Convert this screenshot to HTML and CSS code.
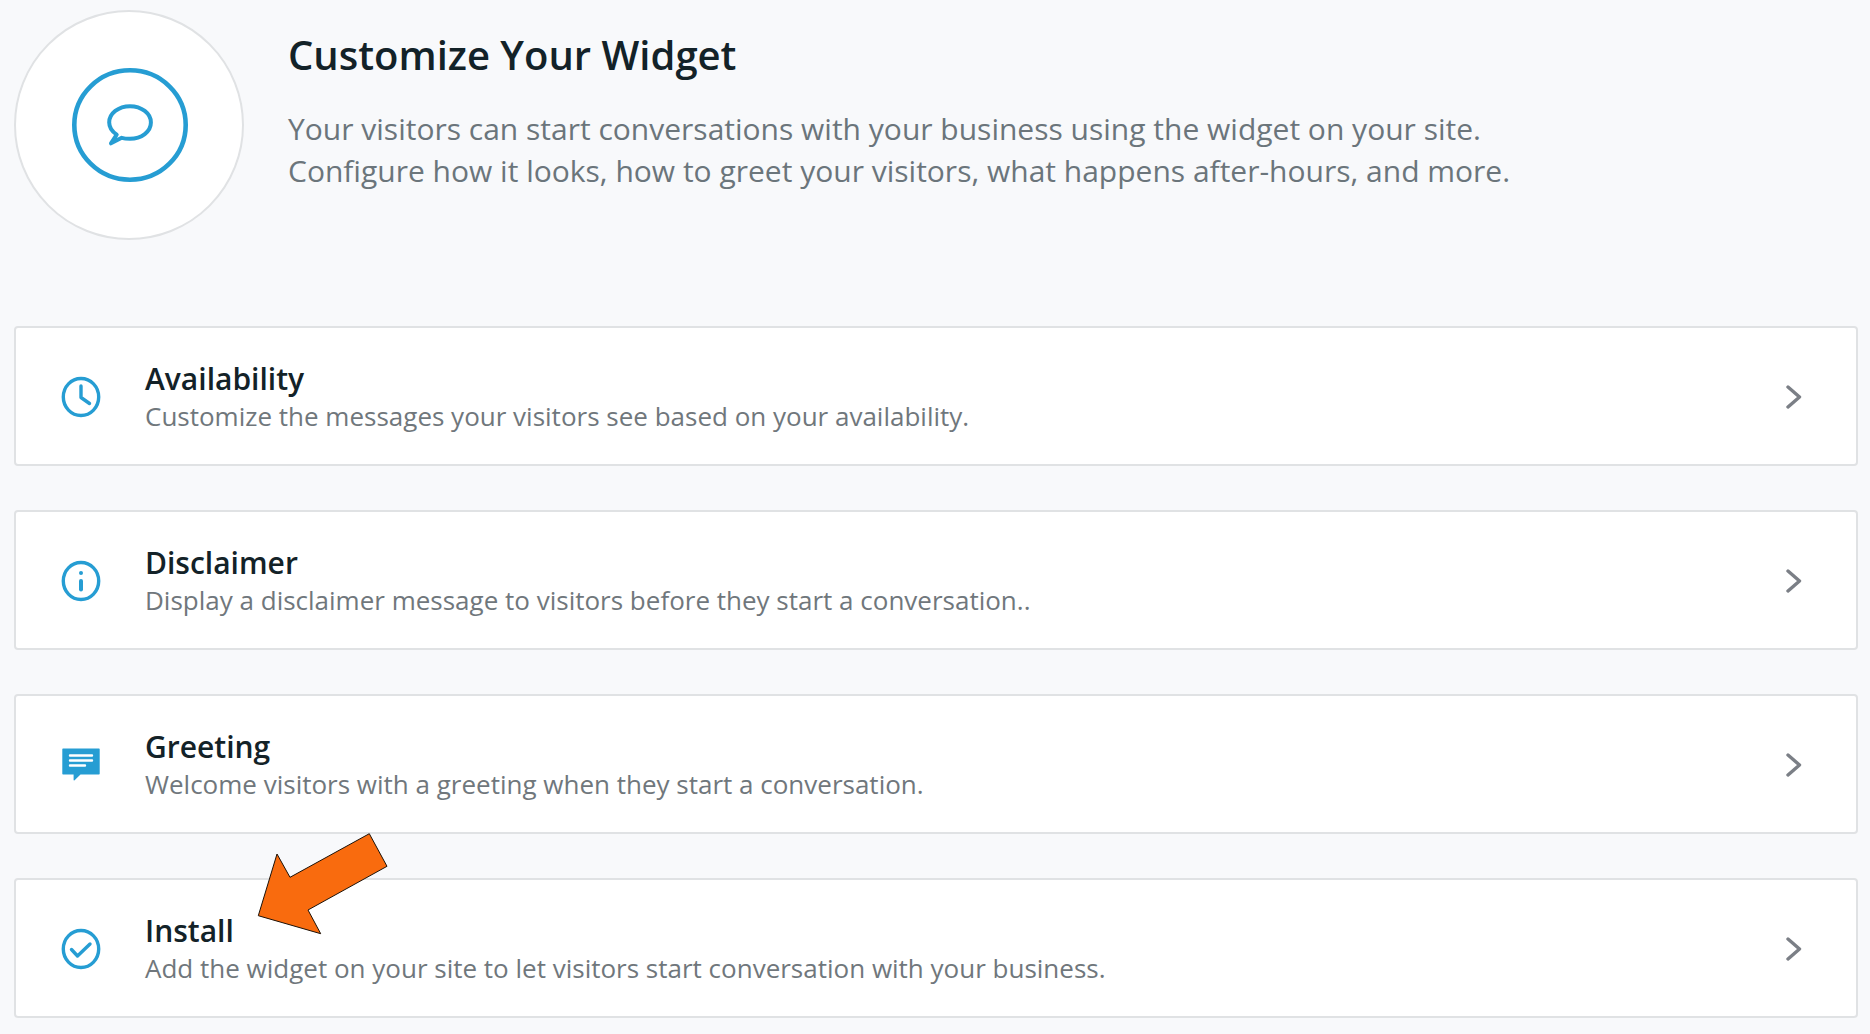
FILE: index.html
```html
<!DOCTYPE html>
<html lang="en">
<head>
    <meta charset="UTF-8">
    <meta name="viewport" content="width=device-width, initial-scale=1.0">
    <title>Customize Your Widget</title>
    <link rel="stylesheet" href="styles.css">
</head>
<body>

<header class="header">
    <div class="header-icon">
        <svg width="116" height="114" viewBox="0 0 116 114" fill="none" stroke="currentColor">
            <ellipse cx="58" cy="57" rx="55.7" ry="54.7" stroke-width="4.6"/>
            <path d="M58 38.2c11.5 0 20.9 7.2 20.9 16.3S69.5 70.8 58 70.8c-2.9 0-5.7-.2-8.3-1L39 75.300l5.700-8.700c-4.600-3-7.500-7.300-7.500-12.100C37.200 45.400 46.500 38.200 58 38.200z" stroke-width="4" stroke-linejoin="round"/>
        </svg>
    </div>
    <div class="header-text">
        <h1>Customize Your Widget</h1>
        <p>Your visitors can start conversations with your business using the widget on your site.<br>
        Configure how it looks, how to greet your visitors, what happens after-hours, and more.</p>
    </div>
</header>

<main class="card-list">
    <a class="card" href="#availability">
        <svg class="card-icon" viewBox="0 0 40 42" fill="none" stroke="currentColor" stroke-linecap="round" stroke-linejoin="round">
            <ellipse cx="20" cy="21" rx="17.7" ry="18.5" stroke-width="3.4"/>
            <path d="M20 10v11.500l8.500 6" stroke-width="3.4"/>
        </svg>
        <div class="card-text">
            <h2>Availability</h2>
            <p>Customize the messages your visitors see based on your availability.</p>
        </div>
        <svg class="chevron" viewBox="0 0 16 24"><path d="M2 2l11.500 10L2 22"/></svg>
    </a>
    <a class="card" href="#disclaimer">
        <svg class="card-icon" viewBox="0 0 40 42" fill="none" stroke="currentColor" stroke-linecap="round">
            <ellipse cx="20" cy="21" rx="17.7" ry="18.5" stroke-width="3.4"/>
            <path d="M20 21v8.500" stroke-width="4"/>
            <circle cx="20" cy="13" r="2" fill="currentColor" stroke="none"/>
        </svg>
        <div class="card-text">
            <h2>Disclaimer</h2>
            <p>Display a disclaimer message to visitors before they start a conversation..</p>
        </div>
        <svg class="chevron" viewBox="0 0 16 24"><path d="M2 2l11.500 10L2 22"/></svg>
    </a>
    <a class="card" href="#greeting">
        <svg class="card-icon" viewBox="0 0 40 42" fill="none">
            <path d="M2 4.500h36a.7.7 0 0 1 .7.7v24.600a.7.7 0 0 1-.7.7H19.500L13.600 36.300a.6.6 0 0 1-1-.4V30.500H2a.7.7 0 0 1-.7-.7V5.200a.7.7 0 0 1 .7-.7z" fill="currentColor"/>
            <path d="M9 11.500h22M9 16.500h22M9 21.500h15" stroke="#fff" stroke-width="2.4" stroke-linecap="round"/>
        </svg>
        <div class="card-text">
            <h2>Greeting</h2>
            <p>Welcome visitors with a greeting when they start a conversation.</p>
        </div>
        <svg class="chevron" viewBox="0 0 16 24"><path d="M2 2l11.500 10L2 22"/></svg>
    </a>
    <a class="card" href="#install">
        <svg class="card-icon" viewBox="0 0 40 42" fill="none" stroke="currentColor" stroke-linecap="round" stroke-linejoin="round">
            <ellipse cx="20" cy="21" rx="17.7" ry="18.5" stroke-width="3.4"/>
            <path d="M10.500 21.500l6 6.500 12.500-12" stroke-width="3.4"/>
        </svg>
        <div class="card-text">
            <h2>Install</h2>
            <p>Add the widget on your site to let visitors start conversation with your business.</p>
        </div>
        <svg class="chevron" viewBox="0 0 16 24"><path d="M2 2l11.500 10L2 22"/></svg>
        <svg class="arrow" width="134" height="106" viewBox="0 0 134 106">
            <path d="M113.300 2.700L131 35.300 52 79l12.700 23.700-62.400-18L21 23l13 23.300z" fill="#f96b0e" stroke="#1d1208" stroke-width="1"/>
        </svg>
    </a>
</main>

</body>
</html>
```

FILE: styles.css
```css
* {
    box-sizing: border-box;
}
body {
    margin: 0;
    padding: 10px 12px 16px 14px;
    background-color: #f8f9fb;
    color: #132228;
    font-family: "Open Sans", "Noto Sans", sans-serif;
}
h1, h2, p {
    margin: 0;
}
.header {
    display: flex;
    gap: 44px;
    margin-bottom: 86px;
}
.header-icon {
    display: flex;
    align-items: center;
    justify-content: center;
    flex-shrink: 0;
    width: 230px;
    height: 230px;
    padding-left: 2px;
    background-color: #fff;
    border: 2px solid #e0e2e4;
    border-radius: 50%;
    color: #269dd3;
}
.header-text {
    padding-top: 15px;
}
.header-text h1 {
    font-size: 40px;
    font-weight: 600;
    line-height: 60px;
    margin-bottom: 23px;
}
.header-text p {
    color: #6b757b;
    font-size: 30px;
    line-height: 42px;
}
.card-list {
    display: flex;
    flex-direction: column;
    gap: 44px;
}
.card {
    position: relative;
    display: flex;
    align-items: center;
    min-height: 140px;
    padding: 2px 54px 0 45px;
    background-color: #fff;
    border: 2px solid #e0e2e4;
    border-radius: 4px;
    color: inherit;
    text-decoration: none;
}
.card-icon {
    flex-shrink: 0;
    width: 40px;
    height: 42px;
    margin-right: 44px;
    color: #269dd3;
}
.card-text {
    flex-grow: 1;
}
.card-text h2 {
    font-size: 30px;
    font-weight: 600;
    line-height: 38px;
}
.card-text p {
    color: #70777c;
    font-size: 26px;
    line-height: 36px;
}
.chevron {
    flex-shrink: 0;
    width: 16px;
    height: 24px;
    fill: none;
    stroke: #7b7f86;
    stroke-width: 3.4;
    stroke-linecap: round;
    stroke-linejoin: round;
}
/* callout pointing at the install row */
.arrow {
    position: absolute;
    top: -49px;
    left: 240px;
    pointer-events: none;
}
```
